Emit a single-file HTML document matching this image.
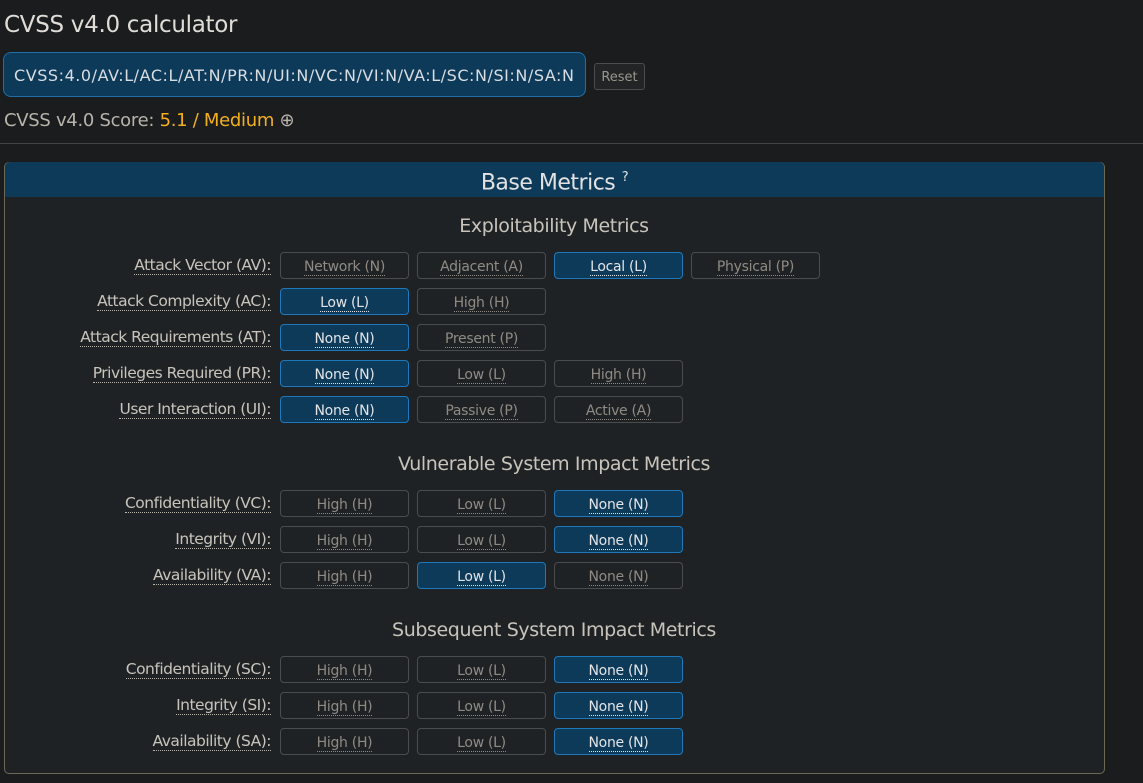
<!DOCTYPE html>
<html><head><meta charset="utf-8"><style>
*{box-sizing:border-box;margin:0;padding:0}
body{width:1143px;height:783px;background:#1b1c1e;font-family:"DejaVu Sans","Liberation Sans",sans-serif;color:#d0ccc4;position:relative;overflow:hidden}
.a{position:absolute}
h1{position:absolute;left:4px;top:12px;font-size:23px;font-weight:normal;color:#e0ddd8;letter-spacing:-0.3px}
.vec{left:3px;top:52px;width:583px;height:45px;background:#0e3a5a;border:1px solid #1f6fa8;border-radius:8px;font-size:16px;color:#d8dde2;padding:13px 0 0 10px;letter-spacing:0.55px;white-space:nowrap;overflow:hidden}
.reset{left:594px;top:63px;width:51px;height:27px;border:1px solid #4a4c4e;border-radius:3px;background:#222426;color:#9a968f;font-size:13px;text-align:center;line-height:27px}
.score{left:4px;top:110px;font-size:18px;color:#b8b4ac;letter-spacing:-0.3px}
.score b{font-weight:normal;color:#f2b01e}
.hr{left:0;top:143px;width:1143px;height:1px;background:#444}
.panel{left:4px;top:162px;width:1101px;height:612px;background:#1f2224;border:1px solid #6e6856;border-radius:5px}
.head{left:5px;top:162px;width:1099px;height:35px;background:#0e3a5a;border-radius:5px 5px 0 0;text-align:center;font-size:22px;color:#e2e2e2;line-height:31px;letter-spacing:-0.5px}
.head sup{font-size:13px}
.sec{left:0;width:1108px;text-align:center;font-size:19px;color:#c8c4bc;letter-spacing:-0.4px}
.lab{right:872px;font-size:15.5px;color:#c8c4bc;border-bottom:1px dotted #b8b4ac;line-height:18px;white-space:nowrap;letter-spacing:-0.5px}
.b{width:129px;height:27px;border:1px solid #4a4c4e;border-radius:4px;text-align:center;font-size:14px;color:#8f8b84;line-height:28px;letter-spacing:-0.3px}
.b span{border-bottom:1px dotted #8f8b84}
.b.on{background:#0e3a5a;border-color:#1f78bb;color:#e2e4e6}
.b.on span{border-bottom-color:#e2e4e6}
</style></head><body>
<h1>CVSS v4.0 calculator</h1>
<div class="a vec">CVSS:4.0/AV:L/AC:L/AT:N/PR:N/UI:N/VC:N/VI:N/VA:L/SC:N/SI:N/SA:N</div>
<div class="a reset">Reset</div>
<div class="a score">CVSS v4.0 Score: <b>5.1 / Medium</b> ⊕</div>
<div class="a hr"></div>
<div class="a panel"></div>
<div class="a head">Base Metrics <sup>?</sup></div>

<div class="a sec" style="top:215px">Exploitability Metrics</div>
<div class="a sec" style="top:453px">Vulnerable System Impact Metrics</div>
<div class="a sec" style="top:619px">Subsequent System Impact Metrics</div>

<div class="a lab" style="top:256px">Attack Vector (AV):</div>
<div class="a b" style="left:280px;top:252px"><span>Network (N)</span></div>
<div class="a b" style="left:417px;top:252px"><span>Adjacent (A)</span></div>
<div class="a b on" style="left:554px;top:252px"><span>Local (L)</span></div>
<div class="a b" style="left:691px;top:252px"><span>Physical (P)</span></div>

<div class="a lab" style="top:292px">Attack Complexity (AC):</div>
<div class="a b on" style="left:280px;top:288px"><span>Low (L)</span></div>
<div class="a b" style="left:417px;top:288px"><span>High (H)</span></div>

<div class="a lab" style="top:328px">Attack Requirements (AT):</div>
<div class="a b on" style="left:280px;top:324px"><span>None (N)</span></div>
<div class="a b" style="left:417px;top:324px"><span>Present (P)</span></div>

<div class="a lab" style="top:364px">Privileges Required (PR):</div>
<div class="a b on" style="left:280px;top:360px"><span>None (N)</span></div>
<div class="a b" style="left:417px;top:360px"><span>Low (L)</span></div>
<div class="a b" style="left:554px;top:360px"><span>High (H)</span></div>

<div class="a lab" style="top:400px">User Interaction (UI):</div>
<div class="a b on" style="left:280px;top:396px"><span>None (N)</span></div>
<div class="a b" style="left:417px;top:396px"><span>Passive (P)</span></div>
<div class="a b" style="left:554px;top:396px"><span>Active (A)</span></div>

<div class="a lab" style="top:494px">Confidentiality (VC):</div>
<div class="a b" style="left:280px;top:490px"><span>High (H)</span></div>
<div class="a b" style="left:417px;top:490px"><span>Low (L)</span></div>
<div class="a b on" style="left:554px;top:490px"><span>None (N)</span></div>

<div class="a lab" style="top:530px">Integrity (VI):</div>
<div class="a b" style="left:280px;top:526px"><span>High (H)</span></div>
<div class="a b" style="left:417px;top:526px"><span>Low (L)</span></div>
<div class="a b on" style="left:554px;top:526px"><span>None (N)</span></div>

<div class="a lab" style="top:566px">Availability (VA):</div>
<div class="a b" style="left:280px;top:562px"><span>High (H)</span></div>
<div class="a b on" style="left:417px;top:562px"><span>Low (L)</span></div>
<div class="a b" style="left:554px;top:562px"><span>None (N)</span></div>

<div class="a lab" style="top:660px">Confidentiality (SC):</div>
<div class="a b" style="left:280px;top:656px"><span>High (H)</span></div>
<div class="a b" style="left:417px;top:656px"><span>Low (L)</span></div>
<div class="a b on" style="left:554px;top:656px"><span>None (N)</span></div>

<div class="a lab" style="top:696px">Integrity (SI):</div>
<div class="a b" style="left:280px;top:692px"><span>High (H)</span></div>
<div class="a b" style="left:417px;top:692px"><span>Low (L)</span></div>
<div class="a b on" style="left:554px;top:692px"><span>None (N)</span></div>

<div class="a lab" style="top:732px">Availability (SA):</div>
<div class="a b" style="left:280px;top:728px"><span>High (H)</span></div>
<div class="a b" style="left:417px;top:728px"><span>Low (L)</span></div>
<div class="a b on" style="left:554px;top:728px"><span>None (N)</span></div>
</body></html>
